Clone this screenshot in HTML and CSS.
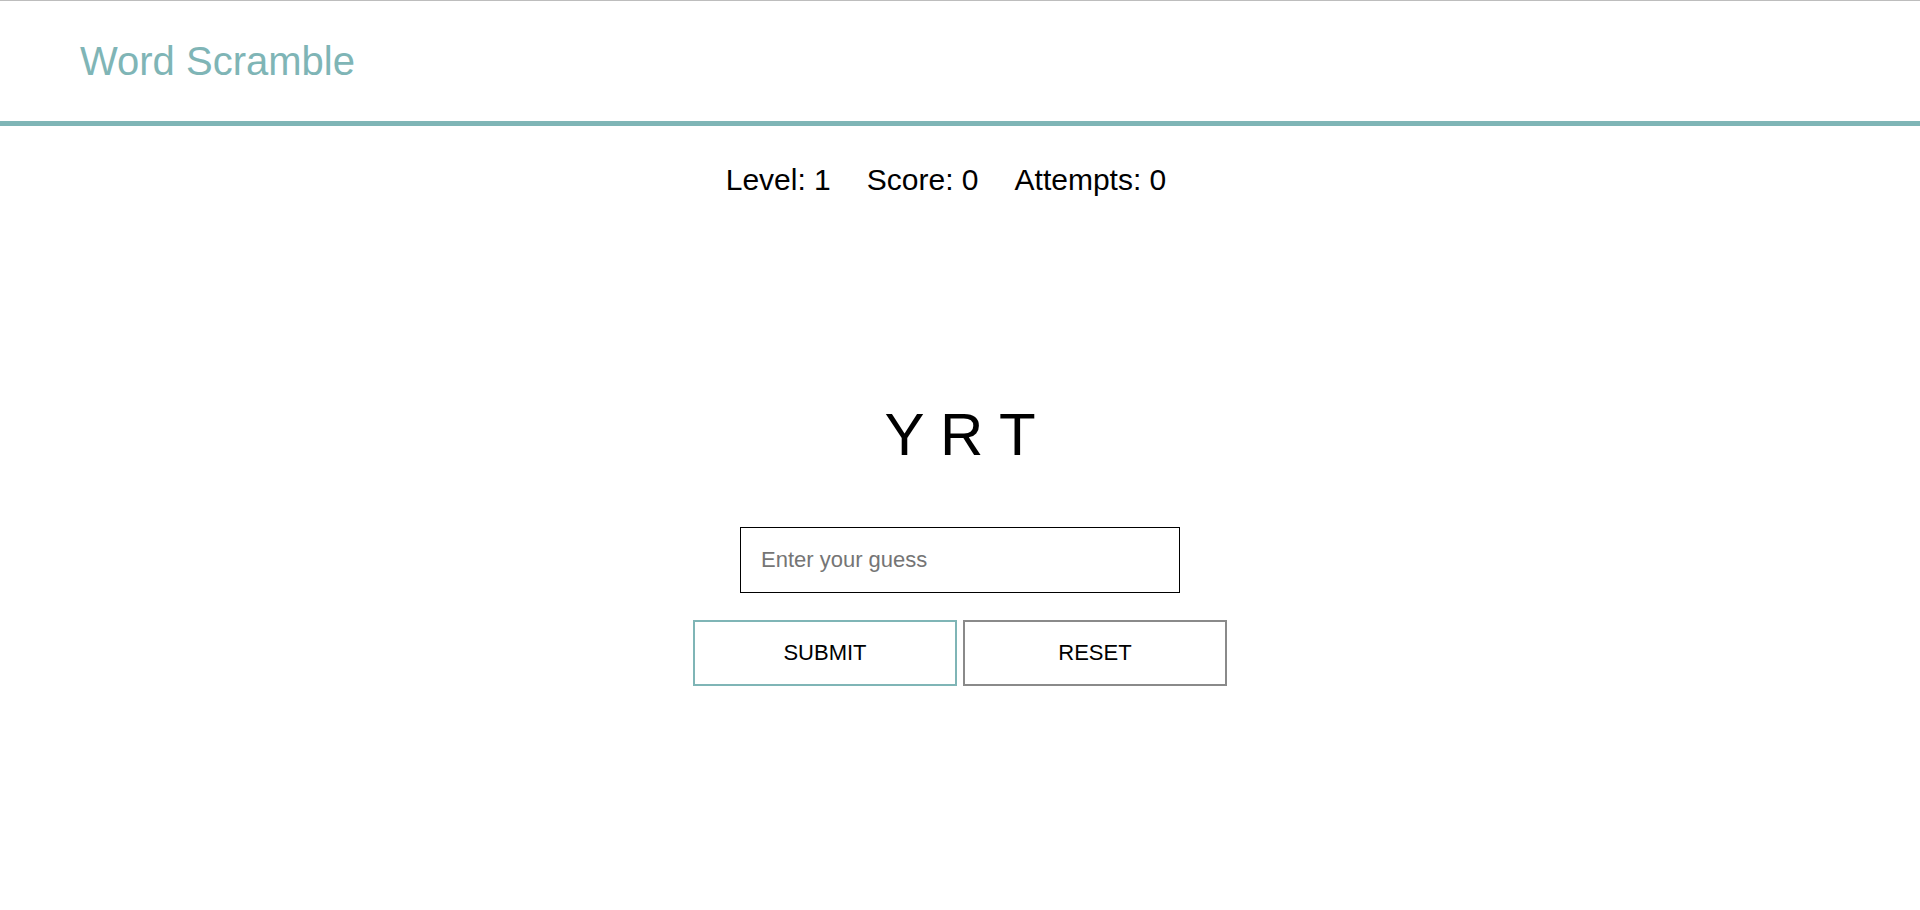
FILE: index.html
```html
<!DOCTYPE html>
<html lang="en">
<head>
<meta charset="utf-8">
<title>Word Scramble</title>
<link rel="stylesheet" href="styles.css">
</head>
<body>
<div class="topline"></div>
<header class="header">
  <h1 class="title">Word Scramble</h1>
</header>
<main class="game">
  <div class="stats">
    <span class="stat">Level: 1</span>
    <span class="stat">Score: 0</span>
    <span class="stat">Attempts: 0</span>
  </div>
  <div class="word">Y R T</div>
  <input class="guess" type="text" placeholder="Enter your guess">
  <div class="actions">
    <button class="btn btn-submit">SUBMIT</button>
    <button class="btn btn-reset">RESET</button>
  </div>
</main>
</body>
</html>
```

FILE: styles.css
```css
* { box-sizing: border-box; }
html, body {
  margin: 0;
  padding: 0;
  background: #fff;
  font-family: "Liberation Sans", Arial, sans-serif;
  color: #000;
}
.topline {
  height: 1px;
  background: #bdbdbd;
}
.header {
  height: 125px;
  display: flex;
  align-items: center;
  padding-left: 80px;
  border-bottom: 5px solid #7fb5b6;
}
.title {
  margin: 0;
  font-size: 40px;
  font-weight: normal;
  color: #7fb5b6;
}
.game {
  display: flex;
  flex-direction: column;
  align-items: center;
}
.stats {
  margin-top: 37px;
  padding-right: 28px;
  display: flex;
  gap: 36px;
  font-size: 30px;
}
.word {
  margin-top: 203px;
  font-size: 60px;
}
.guess {
  margin-top: 58px;
  width: 440px;
  height: 66px;
  border: 1px solid #000;
  border-radius: 0;
  padding: 0 20px;
  font-family: "Liberation Sans", Arial, sans-serif;
  font-size: 22px;
  outline: none;
}
.guess::placeholder { color: #757575; }
.actions {
  margin-top: 27px;
  display: flex;
  gap: 6px;
}
.btn {
  width: 264px;
  height: 66px;
  background: #fff;
  font-family: "Liberation Sans", Arial, sans-serif;
  font-size: 22px;
  color: #000;
  border-radius: 0;
  cursor: pointer;
}
.btn-submit { border: 2px solid #7fb5b6; }
.btn-reset { border: 2px solid #8a8a8a; }
```
